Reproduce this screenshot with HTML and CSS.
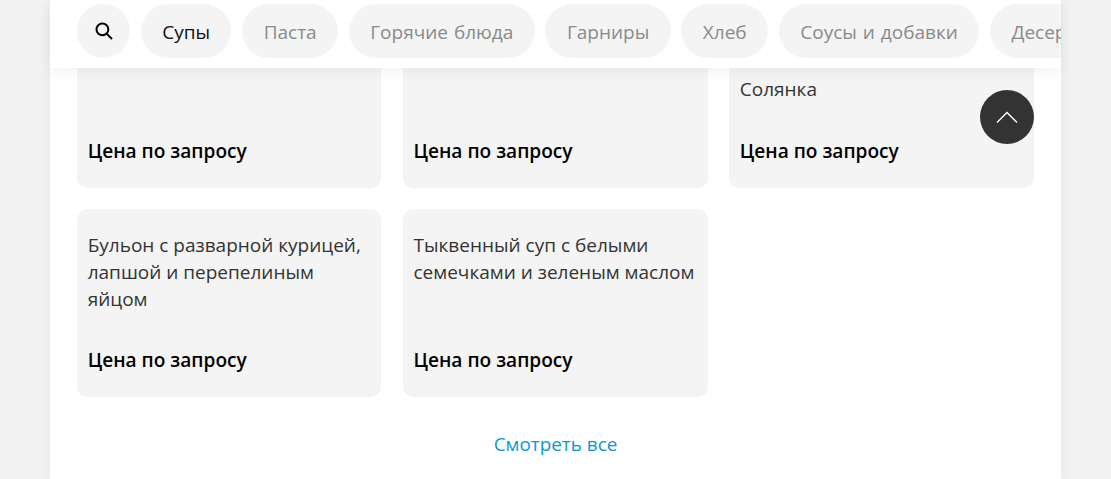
FILE: index.html
```html
<!DOCTYPE html>
<html lang="ru">
<head>
  <meta charset="UTF-8" />
  <meta name="viewport" content="width=device-width, initial-scale=1.0"/>
  <title>Меню</title>
  <link rel="stylesheet" href="styles.css">
</head>
<body>
<div class="page">
  <nav class="menu-nav">
    <button class="pill pill-search" aria-label="Поиск">
      <svg width="18" height="18" viewBox="0 0 18 18" fill="none" stroke="#000" stroke-width="2">
        <circle cx="7.4" cy="7.4" r="5.9"/>
        <path d="M11.6 11.6 17 17"/>
      </svg>
    </button>
    <a class="pill pill-active">Супы</a>
    <a class="pill">Паста</a>
    <a class="pill">Горячие блюда</a>
    <a class="pill">Гарниры</a>
    <a class="pill">Хлеб</a>
    <a class="pill">Соусы и добавки</a>
    <a class="pill">Десерты</a>
  </nav>

  <div class="grid">
    <div class="card">
      <p class="card-title"></p>
      <p class="card-price">Цена по запросу</p>
    </div>
    <div class="card">
      <p class="card-title"></p>
      <p class="card-price">Цена по запросу</p>
    </div>
    <div class="card">
      <p class="card-title card-title-short">Солянка</p>
      <p class="card-price">Цена по запросу</p>
    </div>
    <div class="card">
      <p class="card-title">Бульон с разварной курицей, лапшой и перепелиным яйцом</p>
      <p class="card-price">Цена по запросу</p>
    </div>
    <div class="card">
      <p class="card-title">Тыквенный суп с белыми семечками и зеленым маслом</p>
      <p class="card-price">Цена по запросу</p>
    </div>
  </div>

  <a class="see-all">Смотреть все</a>

  <button class="to-top" aria-label="Наверх">
    <svg width="22" height="14" viewBox="0 0 22 14" fill="none" stroke="#fff" stroke-width="1.4">
      <path d="M1 12.5 11 2.5 21 12.5"/>
    </svg>
  </button>
</div>
</body>
</html>
```

FILE: styles.css
```css
html, body {
  height: 100%;
}

body {
  font-family: "Open Sans", sans-serif;
  margin: 0;
  padding: 0;
  background-color: #f2f2f2;
  overflow: hidden;
}

.page {
  position: relative;
  width: 1011px;
  height: 479px;
  margin-left: 50px;
  padding: 0 27px;
  box-sizing: border-box;
  background: #fff;
  box-shadow: 0 0 15px rgba(0, 0, 0, 0.05);
}

.menu-nav {
  position: absolute;
  top: 0;
  left: 0;
  right: 0;
  height: 68px;
  padding: 4px 0 0 27px;
  box-sizing: border-box;
  display: flex;
  gap: 10.8px;
  background: #fff;
  overflow: hidden;
  box-shadow: 0 4px 12px rgba(0, 0, 0, 0.05);
  z-index: 2;
}

.pill {
  flex: none;
  height: 54px;
  padding: 0 21.4px;
  border: none;
  border-radius: 27px;
  background: #f4f4f4;
  color: #8a8a8a;
  font-family: inherit;
  font-size: 19px;
  word-spacing: 1px;
  line-height: 56px;
}

.pill-active {
  color: #111;
}

.pill-search {
  width: 53px;
  padding: 0 0 1px;
  display: flex;
  align-items: center;
  justify-content: center;
}

.grid {
  display: grid;
  grid-template-columns: 304.3px 304.8px 304.9px;
  grid-auto-rows: 188px;
  column-gap: 21.5px;
  row-gap: 21px;
}

.card {
  display: flex;
  flex-direction: column;
  justify-content: space-between;
  padding: 23px 10.7px;
  box-sizing: border-box;
  background: #f4f4f4;
  border-radius: 10px;
}

.card-title {
  margin: 0;
  font-size: 19px;
  line-height: 27px;
  color: #333;
}

.card-title-short {
  margin-top: 53px;
}

.card-price {
  margin: 0;
  font-size: 19.1px;
  font-weight: 600;
  line-height: 27px;
  color: #000;
}

.see-all {
  display: block;
  margin-top: 34px;
  text-align: center;
  font-size: 18.9px;
  line-height: 27px;
  color: #0d98cf;
}

.to-top {
  position: absolute;
  top: 90px;
  left: 930px;
  width: 54px;
  height: 54px;
  padding: 0;
  border: none;
  border-radius: 50%;
  background: #333;
  display: flex;
  align-items: center;
  justify-content: center;
  z-index: 3;
}
```
